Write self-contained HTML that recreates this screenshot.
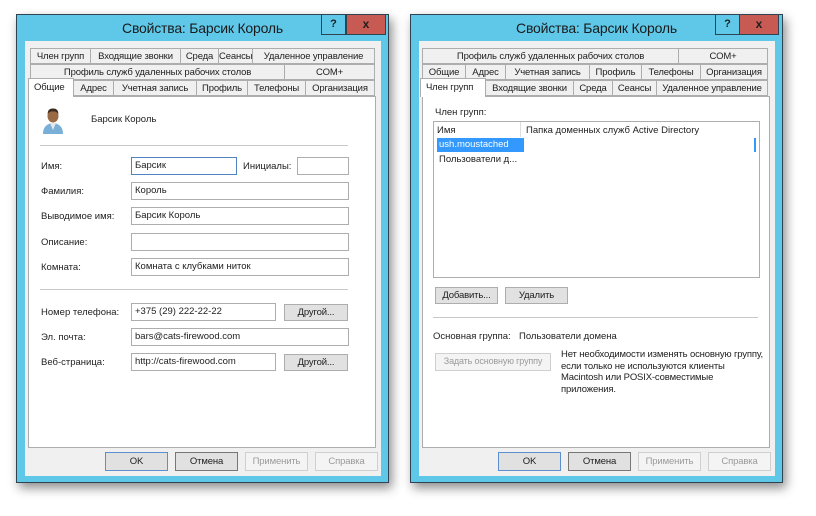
<!DOCTYPE html>
<html><head><meta charset="utf-8"><style>
*{box-sizing:border-box;margin:0;padding:0}
body{width:816px;height:516px;background:#fff;position:relative;overflow:hidden;font-family:"Liberation Sans",sans-serif;font-size:9.5px;color:#1e1e1e}
.a{position:absolute}
.win{position:absolute;background:#5fc8e9;border:1px solid #2f4450;box-shadow:3px 5px 10px rgba(0,0,0,.45)}
.title{position:absolute;top:5px;left:0;right:0;text-align:center;font-size:14px;color:#1a1a1a;letter-spacing:-0.2px}
.help{position:absolute;top:-1px;width:25px;height:21px;border:1px solid #2f4450;background:#5fc8e9;font-weight:bold;font-size:11px;text-align:center;line-height:19px}
.close{position:absolute;top:-1px;width:40px;height:21px;border:1px solid #2f4450;background:#c75a52;font-weight:bold;font-size:12px;text-align:center;line-height:19px}
.inner{position:absolute;background:#f0f0f0}
.tab{position:absolute;height:16px;border:1px solid #adadad;background:#f0f0f0;text-align:center;line-height:15px;white-space:nowrap;letter-spacing:-0.15px;overflow:hidden}
.tab.sel{background:#fff;border-bottom:none;height:19px;z-index:2;line-height:18px;text-align:left;padding-left:5px}
.panel{position:absolute;background:#fff;border:1px solid #adadad}
.in{position:absolute;height:18px;border:1px solid #adadad;background:#fff;padding-left:3px;line-height:16px}
.btn{position:absolute;height:17px;border:1px solid #adadad;background:#e1e1e1;text-align:center;line-height:15px;white-space:nowrap;letter-spacing:-0.15px}
.dis{color:#9a9a9a;background:#f4f4f4;border-color:#cfcfcf}
.sep{position:absolute;height:1px;background:#c8c8c8}
</style></head><body>

<!-- LEFT -->
<div class="win" style="left:16px;top:14px;width:373px;height:469px">
 <div class="title">Свойства: Барсик Король</div>
 <div class="help" style="left:304px">?</div>
 <div class="close" style="left:329px">x</div>
 <div class="inner" style="left:8px;top:26px;width:356px;height:435px"></div>
</div>
<div class="tab" style="left:30px;top:48px;width:61px">Член групп</div>
<div class="tab" style="left:90px;top:48px;width:91px">Входящие звонки</div>
<div class="tab" style="left:180px;top:48px;width:39px">Среда</div>
<div class="tab" style="left:218px;top:48px;width:35px">Сеансы</div>
<div class="tab" style="left:252px;top:48px;width:123px">Удаленное управление</div>
<div class="tab" style="left:30px;top:64px;width:255px">Профиль служб удаленных рабочих столов</div>
<div class="tab" style="left:284px;top:64px;width:91px">COM+</div>
<div class="tab sel" style="left:28px;top:78px;width:46px">Общие</div>
<div class="tab" style="left:73px;top:80px;width:41px">Адрес</div>
<div class="tab" style="left:113px;top:80px;width:84px">Учетная запись</div>
<div class="tab" style="left:196px;top:80px;width:52px">Профиль</div>
<div class="tab" style="left:247px;top:80px;width:59px">Телефоны</div>
<div class="tab" style="left:305px;top:80px;width:70px">Организация</div>
<div class="panel" style="left:28px;top:96px;width:348px;height:352px"></div>
<svg class="a" style="left:40px;top:106px" width="26" height="28" viewBox="0 0 26 28">
 <path d="M3 28 Q3 18 13 17 Q23 18 23 28Z" fill="#7ab0d8"/>
 <path d="M10 17 L13 24 L16 17Z" fill="#e8e8e8"/>
 <ellipse cx="13" cy="10" rx="5.5" ry="6.5" fill="#9a6a45"/>
 <path d="M7.5 8 Q8 2 13 2.5 Q18 2 18.5 8 Q16 5 13 5.5 Q10 5 7.5 8Z" fill="#3a2a1f"/>
</svg>
<div class="a" style="left:91px;top:114px">Барсик Король</div>
<div class="sep" style="left:40px;top:145px;width:308px"></div>
<div class="a" style="left:41px;top:161px">Имя:</div>
<div class="in" style="left:131px;top:157px;width:106px;border-color:#4f84c4">Барсик</div>
<div class="a" style="left:243px;top:161px">Инициалы:</div>
<div class="in" style="left:297px;top:157px;width:52px"></div>
<div class="a" style="left:41px;top:186px">Фамилия:</div>
<div class="in" style="left:131px;top:182px;width:218px">Король</div>
<div class="a" style="left:41px;top:211px">Выводимое имя:</div>
<div class="in" style="left:131px;top:207px;width:218px">Барсик Король</div>
<div class="a" style="left:41px;top:237px">Описание:</div>
<div class="in" style="left:131px;top:233px;width:218px"></div>
<div class="a" style="left:41px;top:262px">Комната:</div>
<div class="in" style="left:131px;top:258px;width:218px">Комната с клубками ниток</div>
<div class="sep" style="left:40px;top:289px;width:308px"></div>
<div class="a" style="left:41px;top:307px">Номер телефона:</div>
<div class="in" style="left:131px;top:303px;width:145px">+375 (29) 222-22-22</div>
<div class="btn" style="left:284px;top:304px;width:64px">Другой...</div>
<div class="a" style="left:41px;top:332px">Эл. почта:</div>
<div class="in" style="left:131px;top:328px;width:218px">bars@cats-firewood.com</div>
<div class="a" style="left:41px;top:357px">Веб-страница:</div>
<div class="in" style="left:131px;top:353px;width:145px">http://cats-firewood.com</div>
<div class="btn" style="left:284px;top:354px;width:64px">Другой...</div>
<div class="btn" style="left:105px;top:452px;width:63px;height:19px;border-color:#5b8fd0;line-height:17px">OK</div>
<div class="btn" style="left:175px;top:452px;width:63px;height:19px;border-color:#777;line-height:17px">Отмена</div>
<div class="btn dis" style="left:245px;top:452px;width:63px;height:19px;line-height:17px">Применить</div>
<div class="btn dis" style="left:315px;top:452px;width:63px;height:19px;line-height:17px">Справка</div>

<!-- RIGHT -->
<div class="win" style="left:410px;top:14px;width:373px;height:469px">
 <div class="title">Свойства: Барсик Король</div>
 <div class="help" style="left:304px">?</div>
 <div class="close" style="left:328px">x</div>
 <div class="inner" style="left:8px;top:26px;width:356px;height:435px"></div>
</div>
<div class="tab" style="left:422px;top:48px;width:257px">Профиль служб удаленных рабочих столов</div>
<div class="tab" style="left:678px;top:48px;width:90px">COM+</div>
<div class="tab" style="left:422px;top:64px;width:44px">Общие</div>
<div class="tab" style="left:465px;top:64px;width:41px">Адрес</div>
<div class="tab" style="left:505px;top:64px;width:85px">Учетная запись</div>
<div class="tab" style="left:589px;top:64px;width:53px">Профиль</div>
<div class="tab" style="left:641px;top:64px;width:60px">Телефоны</div>
<div class="tab" style="left:700px;top:64px;width:68px">Организация</div>
<div class="tab sel" style="left:420px;top:78px;width:66px">Член групп</div>
<div class="tab" style="left:485px;top:80px;width:89px">Входящие звонки</div>
<div class="tab" style="left:573px;top:80px;width:40px">Среда</div>
<div class="tab" style="left:612px;top:80px;width:45px">Сеансы</div>
<div class="tab" style="left:656px;top:80px;width:112px">Удаленное управление</div>
<div class="panel" style="left:422px;top:96px;width:348px;height:352px"></div>
<div class="a" style="left:435px;top:107px">Член групп:</div>
<div class="a" style="left:433px;top:121px;width:327px;height:157px;border:1px solid #adadad;background:#fff"></div>
<div class="a" style="left:437px;top:125px">Имя</div>
<div class="a" style="left:520px;top:122px;width:1px;height:15px;background:#ddd"></div>
<div class="a" style="left:526px;top:125px">Папка доменных служб Active Directory</div>
<div class="a" style="left:437px;top:138px;width:87px;height:14px;background:#3399ff;color:#fff;padding-left:2px;line-height:14px">ush.moustached</div>
<div class="a" style="left:754px;top:138px;width:2px;height:14px;background:#3399ff"></div>
<div class="a" style="left:439px;top:154px">Пользователи д...</div>
<div class="btn" style="left:435px;top:287px;width:63px">Добавить...</div>
<div class="btn" style="left:505px;top:287px;width:63px">Удалить</div>
<div class="sep" style="left:433px;top:317px;width:325px"></div>
<div class="a" style="left:433px;top:331px">Основная группа:</div>
<div class="a" style="left:519px;top:331px">Пользователи домена</div>
<div class="btn dis" style="left:435px;top:353px;width:116px;height:18px;font-size:9px">Задать основную группу</div>
<div class="a" style="left:561px;top:349px;line-height:11.5px;width:205px;letter-spacing:-0.15px">Нет необходимости изменять основную группу, если только не используются клиенты Macintosh или POSIX-совместимые приложения.</div>
<div class="btn" style="left:498px;top:452px;width:63px;height:19px;border-color:#5b8fd0;line-height:17px">OK</div>
<div class="btn" style="left:568px;top:452px;width:63px;height:19px;border-color:#777;line-height:17px">Отмена</div>
<div class="btn dis" style="left:638px;top:452px;width:63px;height:19px;line-height:17px">Применить</div>
<div class="btn dis" style="left:708px;top:452px;width:63px;height:19px;line-height:17px">Справка</div>
</body></html>
